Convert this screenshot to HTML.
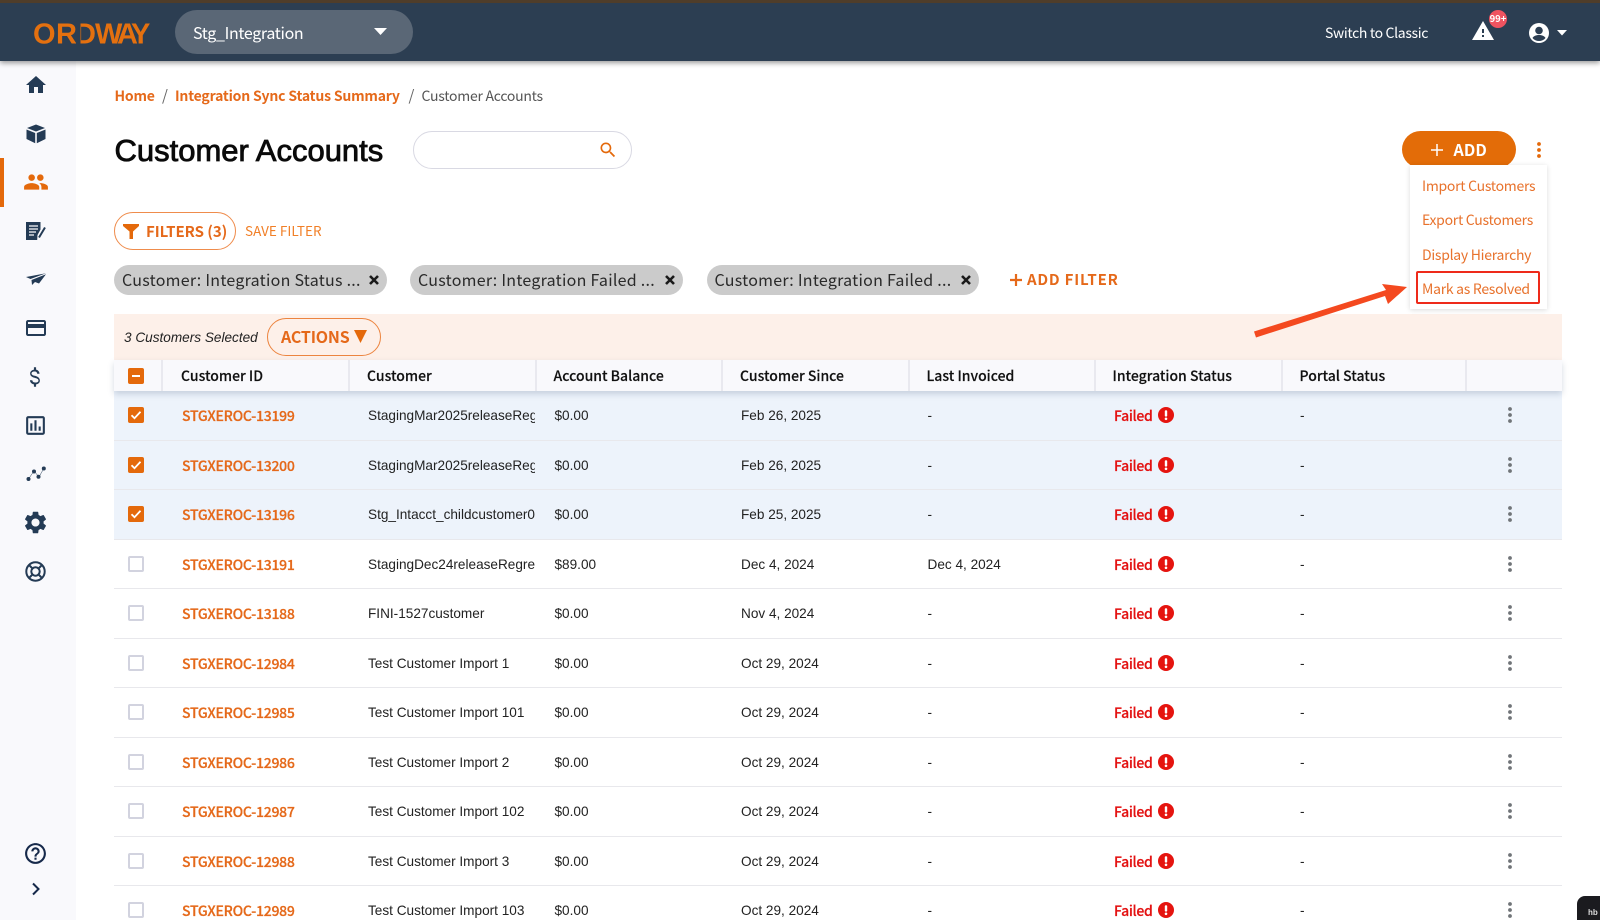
<!DOCTYPE html>
<html><head><meta charset="utf-8"><style>
*{box-sizing:border-box}
html,body{margin:0;padding:0;width:1600px;height:920px;overflow:hidden;background:#fff}
body{position:relative;font-family:"Noto Sans CJK JP","Liberation Sans",sans-serif;color:#222}
.a{position:absolute;white-space:nowrap}
.ic{position:absolute}
.row{position:absolute;left:114px;width:1448px;height:49.5px;border-bottom:1.5px solid #e8e8ec}
.sel{background:#edf3fb}
.row span,.row svg,.row i{position:absolute;white-space:nowrap}
.cb{left:13.500px;top:16px;width:16px;height:16px;border:2px solid #d2d3df;border-radius:2px;background:#fff;display:block}
.ck{left:13.500px;top:16px}
.id{left:68px;top:14px;font-size:14px;line-height:22px;font-weight:500;color:#e5691a;letter-spacing:-.25px;-webkit-text-stroke:.25px #e5691a}
.t{font:13.600px/18px "Liberation Sans",sans-serif;color:#222;top:16px}
.nm{left:254px;width:167px;overflow:hidden}
.bal{left:440.5px}.sin{left:627px}.inv{left:813.5px}.por{left:1186px}
.fl{left:1000px;top:14px;font-size:14px;line-height:22px;font-weight:500;color:#e31212;letter-spacing:-.3px;-webkit-text-stroke:.2px #e31212}
.er{left:1044px;top:16px}
.kb{left:1394px;top:16px}
.th{position:absolute;top:366px;font-size:14px;line-height:21px;font-weight:500;color:#111;letter-spacing:0;white-space:nowrap;-webkit-text-stroke:.15px #111}
.sep{position:absolute;top:360px;width:2px;height:31px;background:#e9e9ef}
.chip{position:absolute;top:265px;height:30px;border-radius:15px;background:#cbcbcb;font-size:16px;line-height:29px;color:#2a2a2a;padding-left:8px;letter-spacing:.26px;white-space:nowrap}
.chip svg{position:absolute;top:9px}
.mi{position:absolute;left:1422px;font-size:14px;line-height:20px;color:#e8722c;letter-spacing:-.28px;white-space:nowrap}
</style></head><body>
<svg width="0" height="0" style="position:absolute"><defs>
<symbol id="ck" viewBox="0 0 16 16"><rect width="16" height="16" rx="2" fill="#e4690b"/><path d="M3.5 8.2l3 3 6-6.4" fill="none" stroke="#fff" stroke-width="1.8"/></symbol>
<symbol id="er" viewBox="0 0 16 16"><circle cx="8" cy="8" r="8" fill="#e5140f"/><rect x="6.8" y="3.2" width="2.4" height="6.4" rx="1" fill="#fff"/><circle cx="8" cy="11.8" r="1.3" fill="#fff"/></symbol>
<symbol id="kb" viewBox="0 0 4 16"><circle cx="2" cy="2" r="1.9" fill="#707478"/><circle cx="2" cy="8" r="1.9" fill="#707478"/><circle cx="2" cy="14" r="1.9" fill="#707478"/></symbol>
<symbol id="x" viewBox="0 0 12 12"><path d="M2 2l8 8M10 2l-8 8" stroke="#1a1a1a" stroke-width="2.6" fill="none"/></symbol>
</defs></svg>

<!-- top bar -->
<div class="a" style="left:0;top:0;width:1600px;height:61px;background:#2c3e52;box-shadow:0 2px 5px rgba(0,0,0,.4);z-index:5"></div>
<div class="a" style="left:0;top:0;width:1600px;height:3px;background:#4f3d2a;z-index:6"></div>
<svg class="ic" style="left:0;top:0;z-index:6" width="170" height="60" viewBox="0 0 170 60">
<text x="33 56 75 95 117 131" y="43.500" font-family="Liberation Sans" font-weight="700" font-size="29" fill="#e4700f">ORDWAY</text>
<rect x="76" y="20" width="4.500" height="26" fill="#2c3e52"/></svg>
<div class="a" style="left:175px;top:10px;width:238px;height:44px;border-radius:22px;background:#5a6776;z-index:6;color:#fff;font-size:16px;line-height:44px;padding-left:18px;letter-spacing:-.33px">Stg_Integration</div>
<svg class="ic" style="left:374px;top:28px;z-index:7" width="13" height="8"><path d="M0 0h13L6.500 7z" fill="#fff"/></svg>
<div class="a" style="left:1325px;top:22px;font-size:14px;line-height:22px;color:#fff;z-index:6;letter-spacing:-.34px">Switch to Classic</div>
<svg class="ic" style="left:1471px;top:19px;z-index:6" width="24" height="24" viewBox="0 0 24 24"><path fill="#fff" d="M1 21h22L12 2 1 21zm12-3h-2v-2h2v2zm0-4h-2v-4h2v4z"/></svg>
<div class="a" style="left:1489px;top:10px;width:18px;height:18px;border-radius:9px;background:#ef5360;color:#fff;font-size:9.500px;line-height:17px;text-align:center;font-weight:700;z-index:7">99+</div>
<svg class="ic" style="left:1527px;top:21px;z-index:6" width="24" height="24" viewBox="0 0 24 24"><circle cx="12" cy="12" r="10" fill="#fff"/><circle cx="12" cy="9.500" r="3.800" fill="#2c3e52"/><path d="M5.500 17c1.500-2.400 4-3 6.500-3s5 .6 6.500 3c-1.600 2-4 3-6.500 3s-4.900-1-6.500-3z" fill="#2c3e52"/></svg>
<svg class="ic" style="left:1557px;top:30px;z-index:6" width="10" height="6"><path d="M0 0h10L5 5.500z" fill="#fff"/></svg>

<!-- sidebar -->
<div class="a" style="left:0;top:61px;width:76px;height:859px;background:#f9f9fc"></div>
<div class="a" style="left:0;top:158px;width:4px;height:49px;background:#e4690b"></div>
<svg class="ic" style="left:24px;top:73px" width="24" height="24" viewBox="0 0 24 24"><path fill="#243b55" d="M10 20v-6h4v6h5v-8h3L12 3 2 12h3v8z"/></svg>
<svg class="ic" style="left:26px;top:124px" width="20" height="20" viewBox="0 0 20 20"><path fill="#243b55" d="M10 .5L1 4l9 3.500L19 4zM.500 5.500V15l8.700 4.300V9zM19.500 5.500L10.800 9v10.300L19.500 15z"/></svg>
<svg class="ic" style="left:23px;top:169px" width="26" height="26" viewBox="0 0 24 24"><path fill="#e4690b" d="M16 11c1.660 0 2.990-1.340 2.990-3S17.660 5 16 5c-1.660 0-3 1.340-3 3s1.340 3 3 3zm-8 0c1.660 0 2.990-1.340 2.990-3S9.660 5 8 5C6.340 5 5 6.340 5 8s1.340 3 3 3zm0 2c-2.330 0-7 1.170-7 3.500V19h14v-2.500c0-2.330-4.670-3.500-7-3.500zm8 0c-.29 0-.62.02-.97.05 1.160.84 1.970 1.970 1.970 3.450V19h6v-2.500c0-2.330-4.670-3.500-7-3.500z"/></svg>
<svg class="ic" style="left:26px;top:222px" width="20" height="18" viewBox="0 0 20 18"><path fill="#243b55" d="M0 0h14.500v7.500l-3 5.500-.3 5H0z"/><path stroke="#f9f9fc" stroke-width="1.300" d="M3 4h9M3 7h9M3 10h7M3 13h5"/><path stroke="#243b55" stroke-width="2" d="M13 15.500L19 5.500"/></svg>
<svg class="ic" style="left:26px;top:273px" width="20" height="12" viewBox="0 0 20 12"><path fill="#243b55" d="M20 .3L0 4l4.500 2zM5.500 7L6 12l3-3 4 1.500L20 1.200z"/></svg>
<svg class="ic" style="left:24px;top:316px" width="24" height="24" viewBox="0 0 24 24"><path fill="#243b55" d="M20 4H4c-1.110 0-1.990.89-1.990 2L2 18c0 1.110.89 2 2 2h16c1.110 0 2-.89 2-2V6c0-1.110-.89-2-2-2zm0 14H4v-6h16v6zm0-10H4V6h16v2z"/></svg>
<svg class="ic" style="left:22px;top:364px" width="26" height="26" viewBox="0 0 24 24"><path fill="#243b55" d="M11.800 10.900c-2.270-.59-3-1.200-3-2.150 0-1.090 1.010-1.850 2.700-1.850 1.780 0 2.440.85 2.500 2.100h2.210c-.07-1.720-1.120-3.300-3.210-3.810V3h-2v2.160c-1.940.42-3.500 1.680-3.500 3.610 0 2.310 1.910 3.460 4.700 4.130 2.500.6 3 1.480 3 2.410 0 .69-.49 1.790-2.700 1.790-2.060 0-2.870-.92-2.980-2.100h-2.200c.12 2.190 1.760 3.420 3.680 3.830V21h2v-2.150c1.950-.37 3.500-1.500 3.500-3.550 0-2.840-2.430-3.810-4.700-4.400z"/></svg>
<svg class="ic" style="left:23px;top:413px" width="25" height="25" viewBox="0 0 24 24"><path fill="#243b55" d="M19 3H5c-1.100 0-2 .9-2 2v14c0 1.100.9 2 2 2h14c1.100 0 2-.9 2-2V5c0-1.100-.9-2-2-2zm0 16H5V5h14v14zM7 10h2v7H7zm4-3h2v10h-2zm4 6h2v4h-2z"/></svg>
<svg class="ic" style="left:26px;top:466px" width="20" height="16" viewBox="0 0 20 16"><path d="M2.500 13L8 5l5 6 5-9" fill="none" stroke="#243b55" stroke-width=".5"/><circle cx="2.500" cy="13" r="2" fill="#243b55"/><circle cx="8" cy="5.500" r="2" fill="#243b55"/><circle cx="12.500" cy="10.800" r="2" fill="#243b55"/><circle cx="17.800" cy="2.500" r="2" fill="#243b55"/></svg>
<svg class="ic" style="left:22px;top:509px" width="27" height="27" viewBox="0 0 24 24"><path fill="#243b55" d="M19.140 12.940c.04-.3.06-.61.06-.94 0-.32-.02-.64-.07-.94l2.030-1.580c.18-.14.23-.41.12-.61l-1.920-3.320c-.12-.22-.37-.29-.59-.22l-2.390.96c-.5-.38-1.030-.7-1.620-.94l-.36-2.540c-.04-.24-.24-.41-.48-.41h-3.840c-.24 0-.43.17-.47.41l-.36 2.540c-.59.24-1.130.57-1.620.94l-2.390-.96c-.22-.08-.47 0-.59.22L2.740 8.870c-.12.21-.08.47.12.61l2.030 1.580c-.05.3-.09.63-.09.94s.02.64.07.94l-2.030 1.580c-.18.14-.23.41-.12.61l1.920 3.320c.12.22.37.29.59.22l2.390-.96c.5.38 1.030.7 1.620.94l.36 2.540c.05.24.24.41.48.41h3.840c.24 0 .44-.17.47-.41l.36-2.540c.59-.24 1.130-.56 1.620-.94l2.390.96c.22.08.47 0 .59-.22l1.920-3.320c.12-.22.07-.47-.12-.61l-2.010-1.580zM12 15.600c-1.980 0-3.600-1.620-3.600-3.600s1.620-3.600 3.600-3.600 3.600 1.620 3.600 3.600-1.620 3.600-3.600 3.600z"/></svg>
<svg class="ic" style="left:25px;top:561px" width="21" height="21" viewBox="0 0 21 21"><circle cx="10.500" cy="10.500" r="9.200" fill="none" stroke="#243b55" stroke-width="2"/><circle cx="10.500" cy="10.500" r="4.200" fill="none" stroke="#243b55" stroke-width="2"/><path d="M4 4l3.500 3.500M17 4l-3.500 3.500M4 17l3.500-3.500M17 17l-3.500-3.500" stroke="#243b55" stroke-width="2"/></svg>
<svg class="ic" style="left:23px;top:841px" width="25" height="25" viewBox="0 0 24 24"><path fill="#16294a" d="M11 18h2v-2h-2v2zm1-16C6.480 2 2 6.480 2 12s4.480 10 10 10 10-4.480 10-10S17.520 2 12 2zm0 18c-4.410 0-8-3.590-8-8s3.590-8 8-8 8 3.590 8 8-3.590 8-8 8zm0-14c-2.210 0-4 1.790-4 4h2c0-1.100.9-2 2-2s2 .9 2 2c0 2-3 1.750-3 5h2c0-2.250 3-2.500 3-5 0-2.210-1.790-4-4-4z"/></svg>
<svg class="ic" style="left:31px;top:882px" width="10" height="14" viewBox="0 0 10 14"><path d="M2 1.500L7.500 7 2 12.500" fill="none" stroke="#16294a" stroke-width="2"/></svg>

<!-- breadcrumb -->
<div class="a" style="left:114.500px;top:85px;font-size:14px;line-height:22px;font-weight:700;color:#e5691a;letter-spacing:-.2px">Home</div>
<div class="a" style="left:162px;top:85px;font-size:15px;line-height:22px;color:#666">/</div>
<div class="a" style="left:175px;top:85px;font-size:14px;line-height:22px;font-weight:700;color:#e5691a;letter-spacing:-.19px">Integration Sync Status Summary</div>
<div class="a" style="left:408.500px;top:85px;font-size:15px;line-height:22px;color:#666">/</div>
<div class="a" style="left:421.500px;top:85px;font-size:14px;line-height:22px;color:#555;letter-spacing:-.26px">Customer Accounts</div>

<div class="a" style="left:114.500px;top:132px;font:400 31px/38px 'Liberation Sans',sans-serif;color:#0a0a0a;-webkit-text-stroke:.85px #0a0a0a">Customer Accounts</div>
<div class="a" style="left:413px;top:131px;width:219px;height:38px;border:1.500px solid #d9d9e3;border-radius:19px;background:#fff"></div>
<svg class="ic" style="left:598px;top:140px" width="20" height="20" viewBox="0 0 24 24"><path fill="#e4690b" d="M15.500 14h-.79l-.28-.27C15.410 12.590 16 11.110 16 9.500 16 5.910 13.090 3 9.500 3S3 5.910 3 9.500 5.910 16 9.500 16c1.610 0 3.090-.59 4.230-1.570l.27.28v.79l5 4.990L20.490 19l-4.990-5zm-6 0C7.010 14 5 11.990 5 9.500S7.010 5 9.500 5 14 7.010 14 9.500 11.990 14 9.500 14z"/></svg>

<!-- add + kebab -->
<div class="a" style="left:1402px;top:131px;width:114px;height:37px;border-radius:18.500px;background:#e36c08"></div>
<svg class="ic" style="left:1431px;top:144px" width="12" height="12"><path d="M6 0v12M0 6h12" stroke="#fff" stroke-width="1.500"/></svg>
<div class="a" style="left:1453.500px;top:137px;font-size:16px;line-height:24px;font-weight:700;color:#fff;letter-spacing:.1px">ADD</div>
<svg class="ic" style="left:1537px;top:142px" width="4" height="16" viewBox="0 0 4 16"><circle cx="2" cy="2" r="1.900" fill="#e4690b"/><circle cx="2" cy="8" r="1.900" fill="#e4690b"/><circle cx="2" cy="14" r="1.900" fill="#e4690b"/></svg>

<!-- filters -->
<div class="a" style="left:114px;top:212px;width:122px;height:38px;border:1.300px solid #ef8c4c;border-radius:19px"></div>
<svg class="ic" style="left:123px;top:224px" width="16" height="15" viewBox="0 0 16 15"><path fill="#e4690b" d="M0 0h16v2L10 7.500V15H6.500V7.500L0 2z"/></svg>
<div class="a" style="left:146px;top:220px;font-size:15px;line-height:23px;font-weight:700;color:#e5691a;letter-spacing:-.06px">FILTERS (3)</div>
<div class="a" style="left:245px;top:220px;font-size:13.500px;line-height:21px;color:#f17f27;letter-spacing:.02px">SAVE FILTER</div>

<div class="chip" style="left:114px;width:273px">Customer: Integration Status ...<svg style="left:254px" width="12" height="12"><use href="#x"/></svg></div>
<div class="chip" style="left:410px;width:273px">Customer: Integration Failed ...<svg style="left:254px" width="12" height="12"><use href="#x"/></svg></div>
<div class="chip" style="left:706.500px;width:272.500px">Customer: Integration Failed ...<svg style="left:253px" width="12" height="12"><use href="#x"/></svg></div>
<svg class="ic" style="left:1010px;top:274px" width="12" height="12"><path d="M6 0v12M0 6h12" stroke="#e5691a" stroke-width="2.200"/></svg>
<div class="a" style="left:1027px;top:268px;font-size:15px;line-height:23px;font-weight:700;color:#e5691a;letter-spacing:.8px">ADD FILTER</div>

<!-- selection bar -->
<div class="a" style="left:114px;top:314px;width:1448px;height:46px;background:#fdf0e9"></div>
<div class="a" style="left:124px;top:329px;font:italic 13.600px/18px 'Liberation Sans',sans-serif;color:#222">3 Customers Selected</div>
<div class="a" style="left:267px;top:318px;width:114px;height:38px;border:1.300px solid #ec843f;border-radius:19px"></div>
<div class="a" style="left:281px;top:324px;font-size:16px;line-height:24px;font-weight:700;color:#e5691a;letter-spacing:-.2px">ACTIONS</div>
<svg class="ic" style="left:354px;top:330px" width="13" height="13"><path d="M0 0h13L6.500 13z" fill="#e4690b"/></svg>

<!-- header -->
<div class="a" style="left:114px;top:360px;width:1448px;height:31px;background:#f9f9fc;box-shadow:0 3px 6px rgba(60,80,120,.22);z-index:2"></div>
<div style="position:absolute;left:0;top:0;z-index:3">
<div class="a" style="left:128px;top:368px;width:16px;height:16px;border-radius:2px;background:#e4690b"></div>
<div class="a" style="left:132px;top:375px;width:8px;height:2px;background:#fff"></div>
<div class="sep" style="left:161px"></div><div class="sep" style="left:348px"></div><div class="sep" style="left:535px"></div><div class="sep" style="left:721px"></div><div class="sep" style="left:908px"></div><div class="sep" style="left:1094px"></div><div class="sep" style="left:1280.500px"></div><div class="sep" style="left:1465px"></div>
<div class="th" style="left:181px">Customer ID</div><div class="th" style="left:367px">Customer</div><div class="th" style="left:553.500px">Account Balance</div><div class="th" style="left:740px">Customer Since</div><div class="th" style="left:926.500px">Last Invoiced</div><div class="th" style="left:1112.500px">Integration Status</div><div class="th" style="left:1299.500px">Portal Status</div>
</div>

<!-- rows -->
<div class="row sel" style="top:391px"><svg class="ck" width="16" height="16"><use href="#ck"/></svg><span class="id">STGXEROC-13199</span><span class="t nm">StagingMar2025releaseRegression</span><span class="t bal">$0.00</span><span class="t sin">Feb 26, 2025</span><span class="t inv">-</span><span class="fl">Failed</span><svg class="er" width="16" height="16"><use href="#er"/></svg><span class="t por">-</span><svg class="kb" width="4" height="16"><use href="#kb"/></svg></div>
<div class="row sel" style="top:440.500px"><svg class="ck" width="16" height="16"><use href="#ck"/></svg><span class="id">STGXEROC-13200</span><span class="t nm">StagingMar2025releaseRegression</span><span class="t bal">$0.00</span><span class="t sin">Feb 26, 2025</span><span class="t inv">-</span><span class="fl">Failed</span><svg class="er" width="16" height="16"><use href="#er"/></svg><span class="t por">-</span><svg class="kb" width="4" height="16"><use href="#kb"/></svg></div>
<div class="row sel" style="top:490px"><svg class="ck" width="16" height="16"><use href="#ck"/></svg><span class="id">STGXEROC-13196</span><span class="t nm">Stg_Intacct_childcustomer01</span><span class="t bal">$0.00</span><span class="t sin">Feb 25, 2025</span><span class="t inv">-</span><span class="fl">Failed</span><svg class="er" width="16" height="16"><use href="#er"/></svg><span class="t por">-</span><svg class="kb" width="4" height="16"><use href="#kb"/></svg></div>
<div class="row" style="top:539.500px"><i class="cb"></i><span class="id">STGXEROC-13191</span><span class="t nm">StagingDec24releaseRegression</span><span class="t bal">$89.00</span><span class="t sin">Dec 4, 2024</span><span class="t inv">Dec 4, 2024</span><span class="fl">Failed</span><svg class="er" width="16" height="16"><use href="#er"/></svg><span class="t por">-</span><svg class="kb" width="4" height="16"><use href="#kb"/></svg></div>
<div class="row" style="top:589px"><i class="cb"></i><span class="id">STGXEROC-13188</span><span class="t nm">FINI-1527customer</span><span class="t bal">$0.00</span><span class="t sin">Nov 4, 2024</span><span class="t inv">-</span><span class="fl">Failed</span><svg class="er" width="16" height="16"><use href="#er"/></svg><span class="t por">-</span><svg class="kb" width="4" height="16"><use href="#kb"/></svg></div>
<div class="row" style="top:638.500px"><i class="cb"></i><span class="id">STGXEROC-12984</span><span class="t nm">Test Customer Import 1</span><span class="t bal">$0.00</span><span class="t sin">Oct 29, 2024</span><span class="t inv">-</span><span class="fl">Failed</span><svg class="er" width="16" height="16"><use href="#er"/></svg><span class="t por">-</span><svg class="kb" width="4" height="16"><use href="#kb"/></svg></div>
<div class="row" style="top:688px"><i class="cb"></i><span class="id">STGXEROC-12985</span><span class="t nm">Test Customer Import 101</span><span class="t bal">$0.00</span><span class="t sin">Oct 29, 2024</span><span class="t inv">-</span><span class="fl">Failed</span><svg class="er" width="16" height="16"><use href="#er"/></svg><span class="t por">-</span><svg class="kb" width="4" height="16"><use href="#kb"/></svg></div>
<div class="row" style="top:737.500px"><i class="cb"></i><span class="id">STGXEROC-12986</span><span class="t nm">Test Customer Import 2</span><span class="t bal">$0.00</span><span class="t sin">Oct 29, 2024</span><span class="t inv">-</span><span class="fl">Failed</span><svg class="er" width="16" height="16"><use href="#er"/></svg><span class="t por">-</span><svg class="kb" width="4" height="16"><use href="#kb"/></svg></div>
<div class="row" style="top:787px"><i class="cb"></i><span class="id">STGXEROC-12987</span><span class="t nm">Test Customer Import 102</span><span class="t bal">$0.00</span><span class="t sin">Oct 29, 2024</span><span class="t inv">-</span><span class="fl">Failed</span><svg class="er" width="16" height="16"><use href="#er"/></svg><span class="t por">-</span><svg class="kb" width="4" height="16"><use href="#kb"/></svg></div>
<div class="row" style="top:836.500px"><i class="cb"></i><span class="id">STGXEROC-12988</span><span class="t nm">Test Customer Import 3</span><span class="t bal">$0.00</span><span class="t sin">Oct 29, 2024</span><span class="t inv">-</span><span class="fl">Failed</span><svg class="er" width="16" height="16"><use href="#er"/></svg><span class="t por">-</span><svg class="kb" width="4" height="16"><use href="#kb"/></svg></div>
<div class="row" style="top:886px"><i class="cb"></i><span class="id">STGXEROC-12989</span><span class="t nm">Test Customer Import 103</span><span class="t bal">$0.00</span><span class="t sin">Oct 29, 2024</span><span class="t inv">-</span><span class="fl">Failed</span><svg class="er" width="16" height="16"><use href="#er"/></svg><span class="t por">-</span><svg class="kb" width="4" height="16"><use href="#kb"/></svg></div>

<!-- menu -->
<div class="a" style="left:1410px;top:165px;width:137px;height:144px;background:#fff;box-shadow:0 1px 5px rgba(0,0,0,.14);z-index:8">
</div>
<div style="position:absolute;left:0;top:0;z-index:9">
<div class="mi" style="top:176px">Import Customers</div>
<div class="mi" style="top:210px">Export Customers</div>
<div class="mi" style="top:244.500px">Display Hierarchy</div>
<div class="mi" style="top:279px">Mark as Resolved</div>
<div class="a" style="left:1416px;top:271px;width:124px;height:33px;border:2px solid #ee2a1a;border-radius:2px"></div>
</div>
<svg class="ic" style="left:1250px;top:280px;z-index:9" width="160" height="60" viewBox="0 0 160 60"><path fill="#f4491f" d="M4 51.500L136 10 132 4 157 7 138 24 135 16 6 57.500z"/></svg>

<div class="a" style="left:1577px;top:896px;width:23px;height:24px;background:#1b1b1f;border-radius:8px 0 0 0;color:#ddd;font:700 8px/24px 'Liberation Sans',sans-serif;padding:5px 0 0 11px;z-index:10">hb</div>
</body></html>
